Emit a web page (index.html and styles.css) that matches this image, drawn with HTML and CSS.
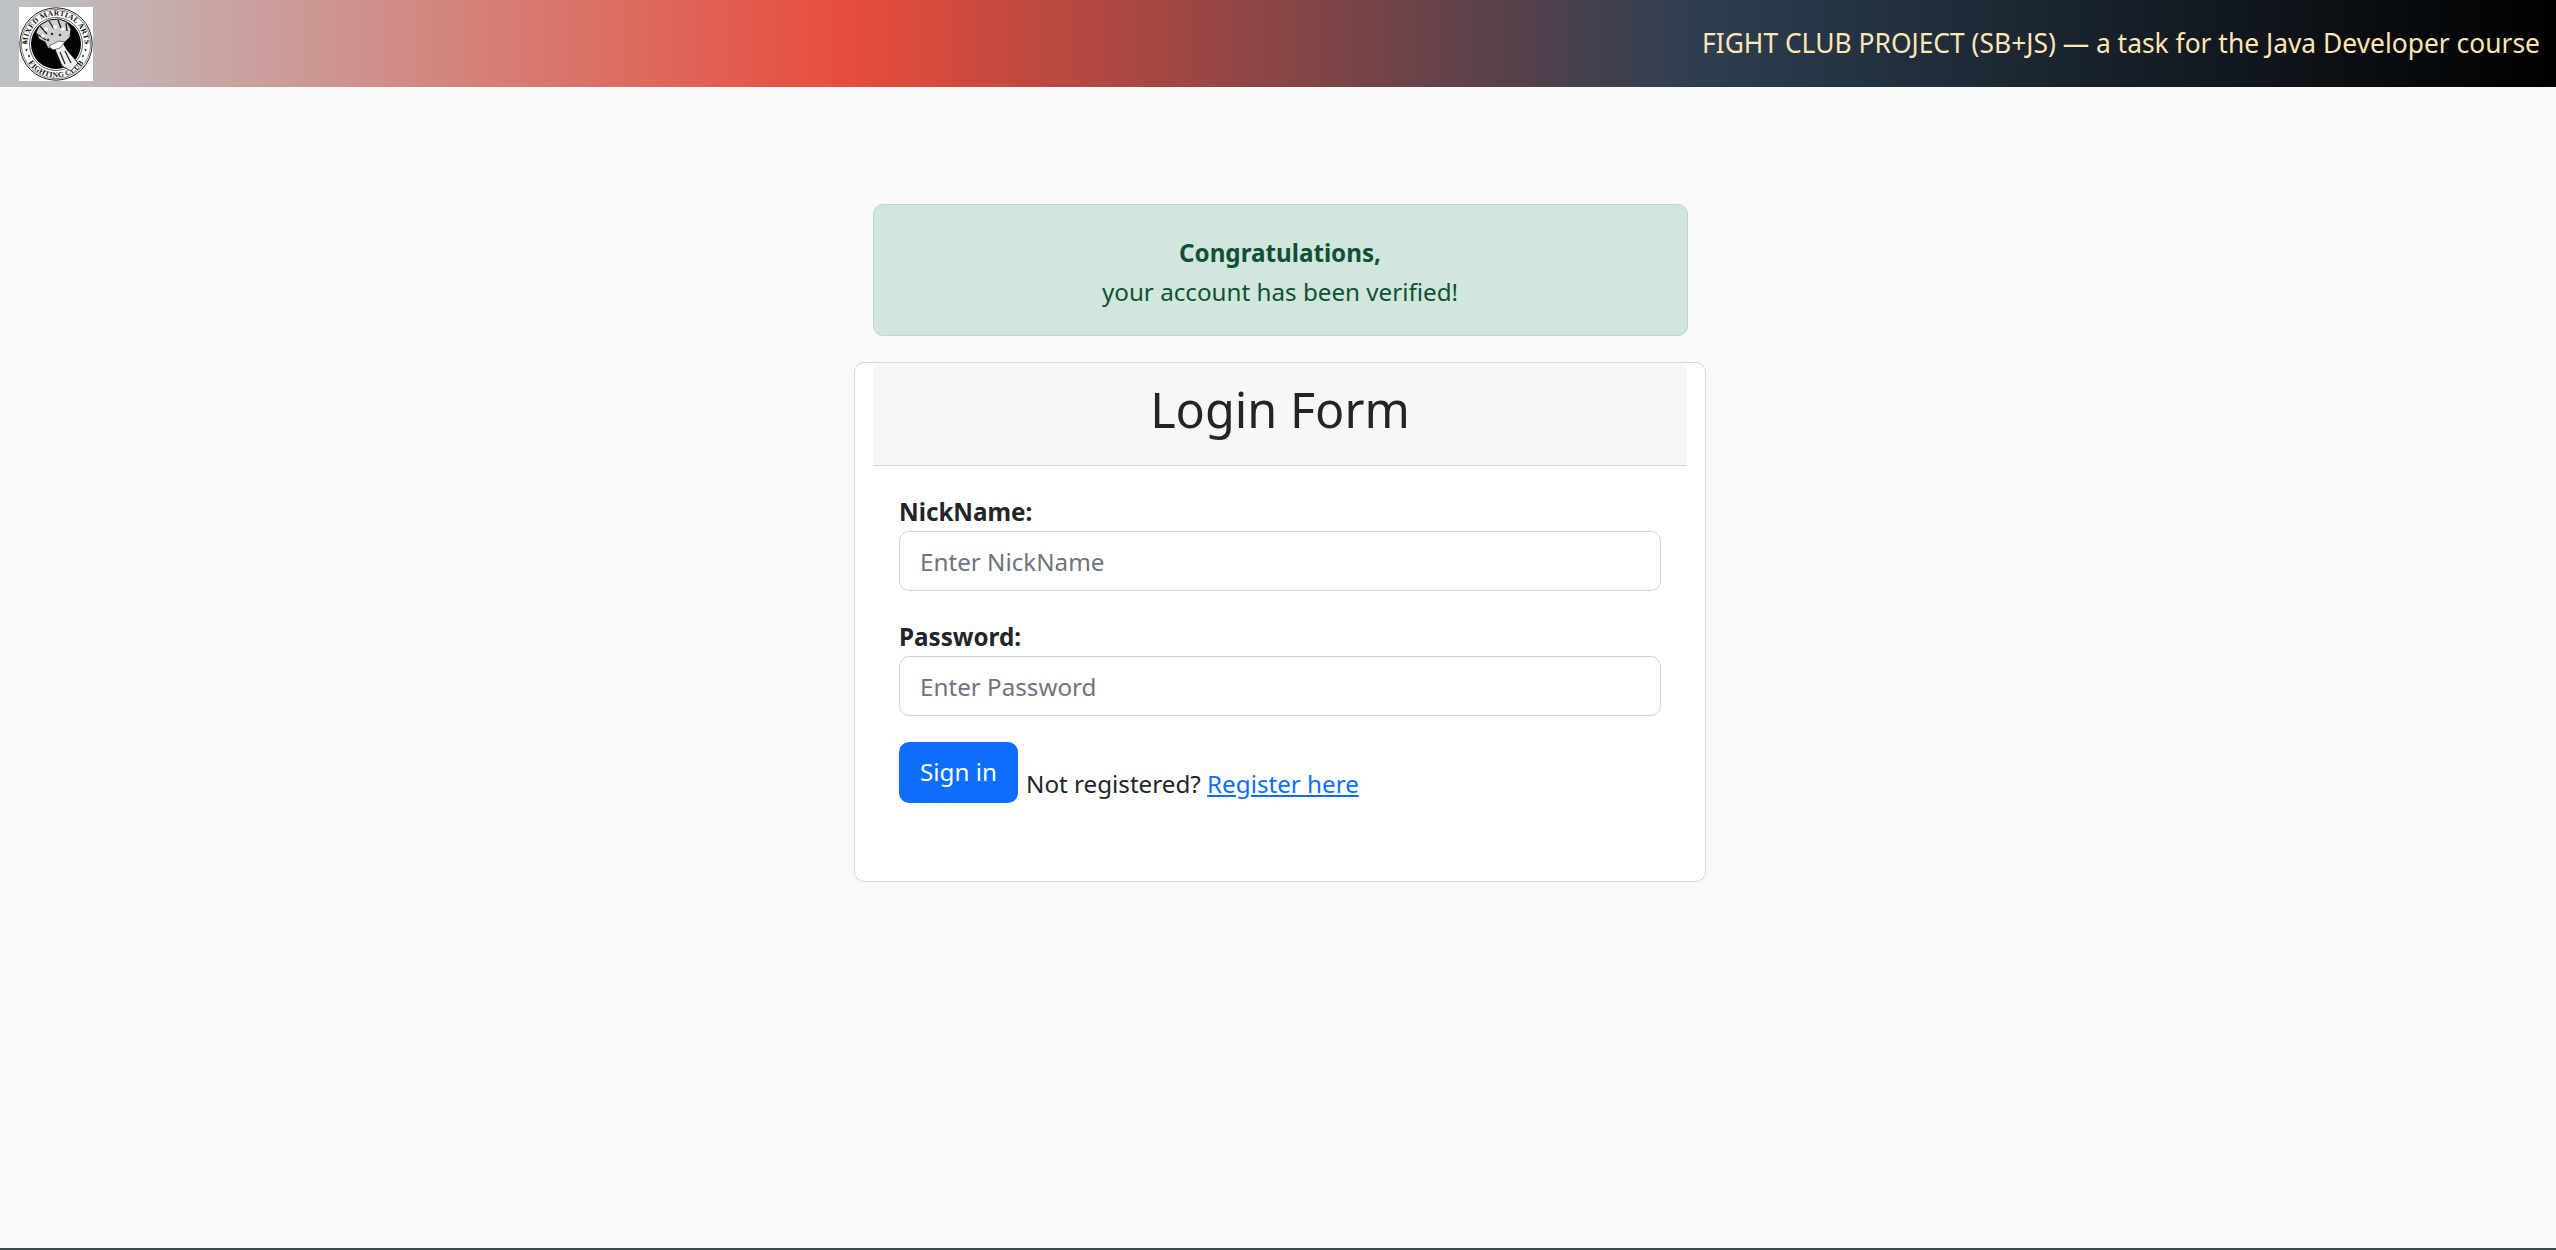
FILE: index.html
```html
<!DOCTYPE html>
<html lang="en">
<head>
<meta charset="utf-8">
<title>Login</title>
<link rel="stylesheet" href="styles.css">
</head>
<body>
<header class="topbar">
  <svg class="logo" viewBox="0 0 74 74" aria-label="Mixed Martial Arts Fighting Club">
    <defs>
      <path id="arcTop" d="M8.5 37a28.5 28.5 0 0 1 57 0"/>
      <path id="arcBottom" d="M3.5 37a33.5 33.5 0 0 0 67 0"/>
    </defs>
    <rect width="74" height="74" fill="#fff"/>
    <circle cx="37" cy="37" r="36.2" fill="#fff" stroke="#222" stroke-width="1"/>
    <circle cx="37" cy="37" r="34.6" fill="none" stroke="#333" stroke-width=".6"/>
    <circle cx="37" cy="37" r="26.5" fill="none" stroke="#222" stroke-width=".7"/>
    <circle cx="37" cy="37" r="25" fill="#050505"/>
    <text class="logo-text"><textPath href="#arcTop" startOffset="50%" text-anchor="middle">MIXED MARTIAL ARTS</textPath></text>
    <text class="logo-text"><textPath href="#arcBottom" startOffset="50%" text-anchor="middle">FIGHTING CLUB</textPath></text>
    <g fill="#222">
      <circle cx="6.5" cy="36" r="1"/><circle cx="7.5" cy="43" r="1"/><circle cx="10" cy="49" r="1"/>
      <circle cx="67.5" cy="36" r="1"/><circle cx="66.5" cy="43" r="1"/><circle cx="64" cy="49" r="1"/>
    </g>
    <path d="M35 40l8-6 5 9 11 13-7 8-9-5z" fill="#eee" stroke="#111" stroke-width=".8"/>
    <path d="M41 45l5 12M46 44l6 12M37 47l3 9" stroke="#111" stroke-width="1.1" fill="none"/>
    <path d="M17 25l4-7 9-5 10-1 8 3 4 7-1 8-6 6-6 2-3 5-7-2-3-6-6-3-3-7z" fill="#cfcfcf" stroke="#111" stroke-width=".9"/>
    <path d="M30 14l5 8M39 13l3 8M47 16l1 8M21 19l7 8M18 27l9 6" stroke="#222" stroke-width="1.4" fill="none"/>
    <g fill="#fff"><circle cx="27" cy="22" r="2"/><circle cx="36" cy="20" r="2"/><circle cx="44" cy="22" r="1.8"/><circle cx="24" cy="29" r="1.8"/></g>
    <g fill="#333"><circle cx="33" cy="27" r="1.3"/><circle cx="41" cy="28" r="1.3"/><circle cx="29" cy="33" r="1.3"/></g>
    <path d="M30 39l10-5 6 1-5 6-7 2z" fill="#fff" stroke="#222" stroke-width=".6"/>
  </svg>
  <p class="ticker">FIGHT CLUB PROJECT (SB+JS) — a task for the Java Developer course from JavaRush</p>
</header>
<main class="page">
  <div class="alert">
    <strong>Congratulations,</strong>
    <span>your account has been verified!</span>
  </div>
  <section class="card">
    <h1 class="card-header">Login Form</h1>
    <form class="card-body">
      <div class="field">
        <label class="label" for="nick">NickName:</label>
        <input class="input" id="nick" type="text" placeholder="Enter NickName">
      </div>
      <div class="field">
        <label class="label" for="pass">Password:</label>
        <input class="input" id="pass" type="password" placeholder="Enter Password">
      </div>
      <div class="actions">
        <button class="btn" type="button">Sign in</button>
        <span class="note">Not registered? <a href="#">Register here</a></span>
      </div>
    </form>
  </section>
</main>
</body>
</html>
```
FILE: styles.css
```css
* { box-sizing: border-box; }
html, body { height: 100%; }
body {
  margin: 0;
  display: flex;
  flex-direction: column;
  background: #f8f9fa;
  color: #212529;
  font-family: "Noto Sans", "Open Sans", sans-serif;
  font-size: 24.2px;
  line-height: 1.5;
  border-bottom: 2px solid #3d4a4a;
  overflow: hidden;
}
.topbar {
  height: 87px;
  flex: none;
  display: flex;
  align-items: center;
  padding: 0 15px 0 19px;
  overflow: hidden;
  background: linear-gradient(to right, #bdc3c7, #e74c3c, #2c3e50, #000);
}
.logo { width: 74px; height: 74px; flex: none; }
.logo-text { font-family: "Liberation Serif", serif; font-size: 7.6px; font-weight: 700; fill: #111; letter-spacing: .25px; }
.ticker {
  margin: 0 0 0 auto;
  width: 839px;
  flex: none;
  white-space: nowrap;
  overflow: hidden;
  color: #ffe5b4;
  font-size: 26.4px;
}
.page {
  display: flex;
  flex-direction: column;
  align-items: center;
  padding: 117px 0 0 4px;
}
.alert {
  width: 815px;
  height: 132px;
  padding-top: 3px;
  display: flex;
  flex-direction: column;
  align-items: center;
  justify-content: center;
  background: #d1e7dd;
  border: 1px solid #badbcc;
  border-radius: 10px;
  color: #0f5132;
  line-height: 39px;
}
.card {
  width: 852px;
  height: 520px;
  margin-top: 26px;
  padding: 0 18px;
  background: #fff;
  border: 1px solid #d9dadb;
  border-radius: 10px;
}
.card-header {
  height: 103px;
  margin: 0;
  background: #f7f7f7;
  border-bottom: 1px solid #d4d4d5;
  border-radius: 6px 6px 0 0;
  font-size: 48.5px;
  font-weight: 400;
  line-height: 92px;
  text-align: center;
}
.card-body { padding: 26px 26px 0; }
.field { margin-bottom: 26px; }
.label { display: block; font-weight: 700; line-height: 39px; }
.input {
  display: block;
  width: 100%;
  height: 60px;
  padding: 0 20px;
  background: #fff;
  border: 1px solid #ced4da;
  border-radius: 10px;
  color: #212529;
  font: inherit;
}
.input::placeholder { color: #6c757d; }
.actions { display: flex; align-items: flex-end; gap: 8px; }
.btn {
  width: 119px;
  height: 61px;
  padding: 0;
  background: #0d6efd;
  border: 0;
  border-radius: 10px;
  color: #fff;
  font: inherit;
}
.note { line-height: 39px; }
.note a { color: #0d6efd; }
```
